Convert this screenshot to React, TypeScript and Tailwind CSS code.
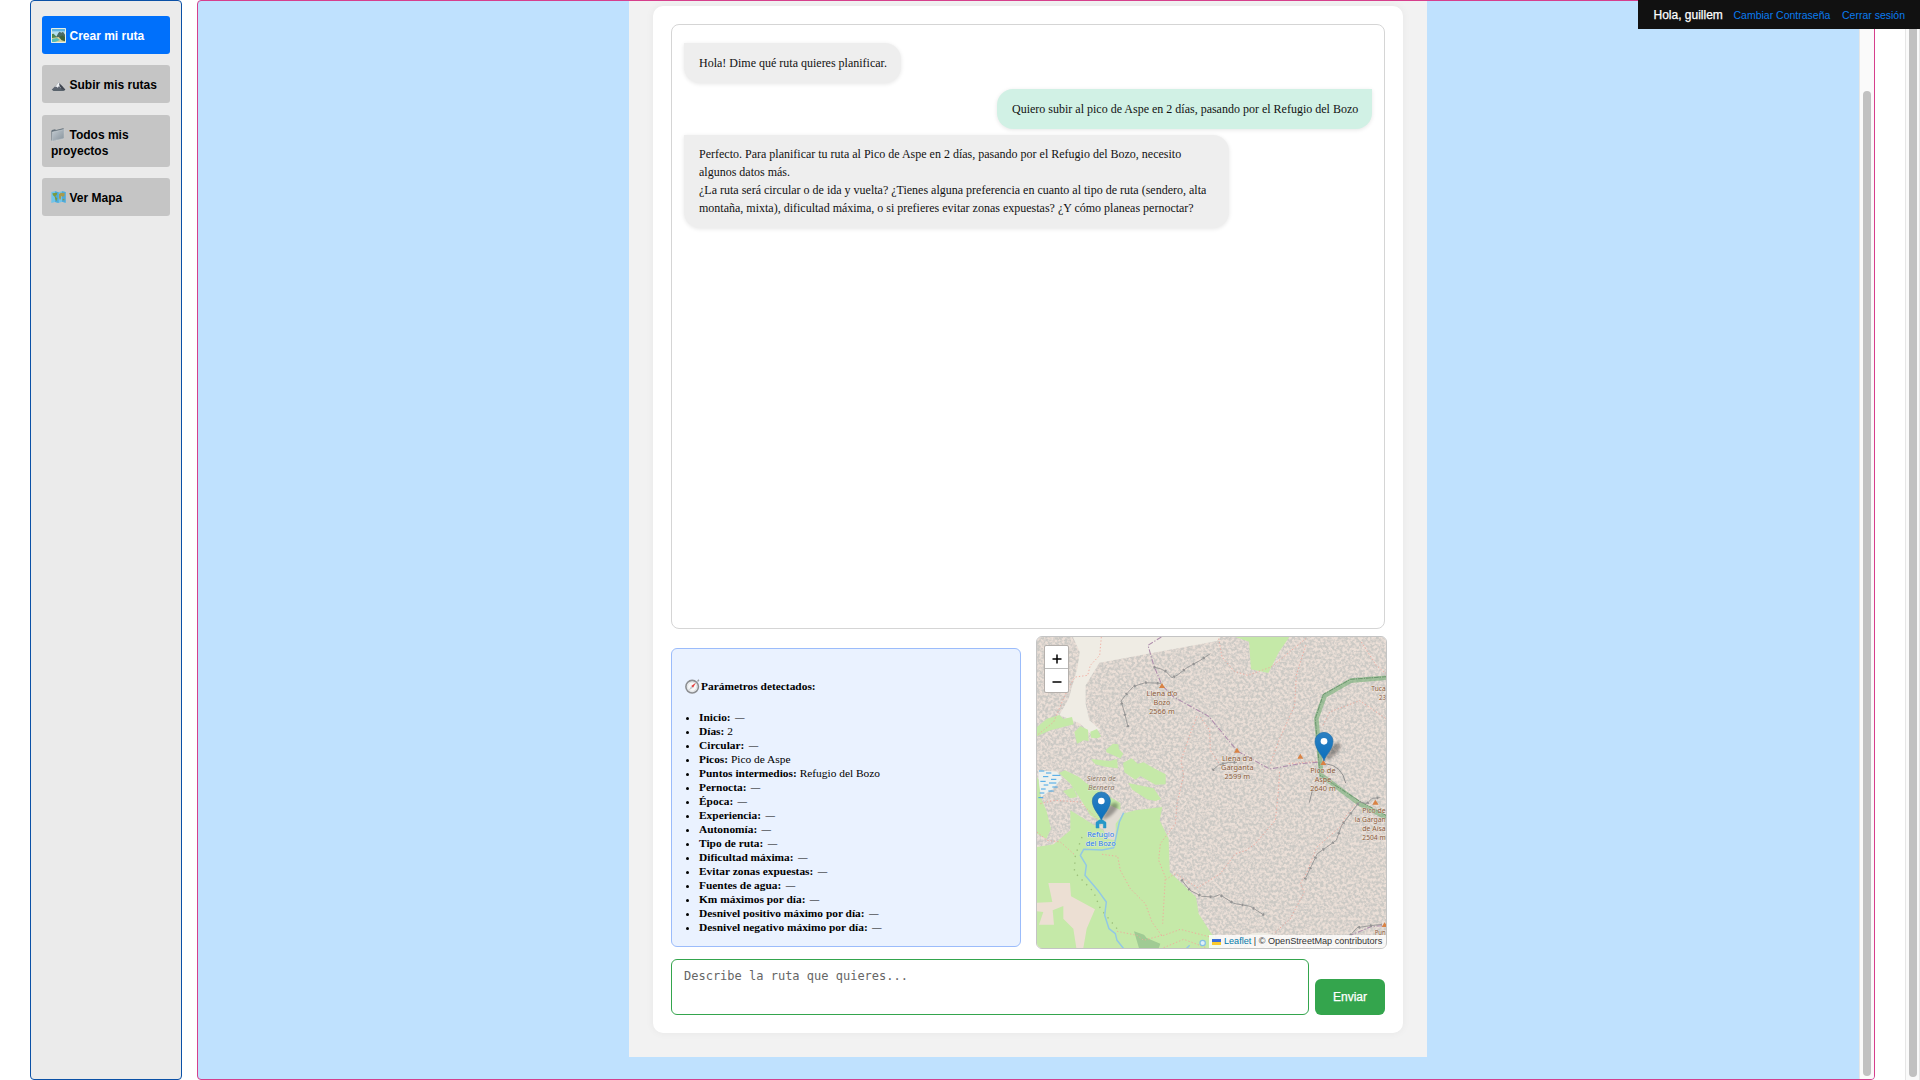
import React from "react";

const serif = "font-['Liberation_Serif',serif]";

function LandscapeIcon() {
  return (
    <svg className="h-[15px] w-[15px] shrink-0" viewBox="0 0 45 45">
      <rect width="45" height="45" rx="2" fill="#e6efe4" />
      <rect x="3" y="3" width="39" height="39" fill="#5fb4e0" />
      <rect x="3" y="10" width="39" height="18" fill="#b4dff0" />
      <path d="M15 28 22 15 26 11 31 14 36 11 42 20V34H15z" fill="#4a6c66" />
      <path d="M3 18 8 17 12 22 18 27 18 32 3 31z" fill="#4c8451" />
      <path d="M3 30 24 27 42 34V42H3z" fill="#d6d19c" />
      <path d="M3 33 18 30 27 36 12 42H3z" fill="#55bdb6" />
      <path d="M24 28 34 22 42 28V40L32 37z" fill="#3b633d" />
    </svg>
  );
}

function MountainIcon() {
  return (
    <svg className="h-[15px] w-[15px] shrink-0" viewBox="0 0 45 45">
      <path d="M2 38 10 30 17 24 23 16 28 21 34 28 43 38 36 41 8 41z" fill="#5d6470" />
      <path d="M23 16 17 24 12 30 18 29 20 33 24 27 29 33 31 27z" fill="#f1f3f6" />
      <path d="M24 19 26 28 32 35 28 40H40L43 38 33 27z" fill="#3f4550" />
      <path d="M4 38Q22 33 42 39L36 42 8 42z" fill="#59636c" />
    </svg>
  );
}

function FolderIcon() {
  return (
    <svg className="h-[15px] w-[15px] shrink-0" viewBox="0 0 45 45">
      <defs>
        <linearGradient id="folder" x1="0" y1="0" x2="1" y2="1">
          <stop offset="0" stopColor="#c4ccd2" />
          <stop offset="1" stopColor="#84909a" />
        </linearGradient>
      </defs>
      <path d="M1 12 3 9 12 7 15 9 36 4 39 5V33L3 42 1 40z" fill="#66727c" />
      <path d="M4 15 40 7 37 35 3 42z" fill="url(#folder)" stroke="#d7dde1" strokeWidth="1.2" />
    </svg>
  );
}

function WorldMapIcon() {
  return (
    <svg className="h-[15px] w-[15px] shrink-0" viewBox="0 0 45 45">
      <path d="M1 6 12 4 23 7 33 4 44 6V38L33 35 23 39 12 36 1 39z" fill="#6fc4ea" />
      <path d="M12 4 23 7V39L12 36zM33 4 44 6V38L33 35z" fill="#4fa9d8" />
      <path d="M4 10 19 8 17 15 13 18 15 22 19 25 16 34 13 28 11 20 6 16z" fill="#7c9a3d" />
      <path d="M24 12 30 8 41 10 40 18 35 20 31 17 30 25 27 31 24 23z" fill="#a99a4a" />
      <path d="M35 27 40 26 40 31 35 31z" fill="#8f9a41" />
    </svg>
  );
}

function CompassIcon() {
  return (
    <svg className="h-[15px] w-[15px] shrink-0" viewBox="0 0 43 43">
      <circle cx="20.5" cy="22" r="18" fill="#eceff1" stroke="#8c8e91" strokeWidth="4.5" />
      <circle cx="20.5" cy="22" r="13" fill="#f7f8f9" stroke="#d0d3d6" strokeWidth="1.5" />
      <path d="M36 7 40 2" stroke="#9a9c9f" strokeWidth="4" />
      <path d="M31 11 18 20 23 25z" fill="#e23b3b" />
      <path d="M11 32 18 20 23 25z" fill="#c3c8cd" />
    </svg>
  );
}

const navItems = [
  { label: "Crear mi ruta", icon: <LandscapeIcon />, cls: "h-[38px] pt-[2px] bg-[#0070fb] text-white" },
  { label: "Subir mis rutas", icon: <MountainIcon />, cls: "mt-[11px] h-[38px] pt-[2px] bg-[#c5c5c5] text-black" },
  { label: "Todos mis proyectos", icon: <FolderIcon />, cls: "mt-[12px] h-[52px] pt-[4px] bg-[#c5c5c5] text-black" },
  { label: "Ver Mapa", icon: <WorldMapIcon />, cls: "mt-[11px] h-[38px] pt-[2px] bg-[#c5c5c5] text-black" },
];

const params: [string, string][] = [
  ["Inicio:", "—"],
  ["Días:", "2"],
  ["Circular:", "—"],
  ["Picos:", "Pico de Aspe"],
  ["Puntos intermedios:", "Refugio del Bozo"],
  ["Pernocta:", "—"],
  ["Época:", "—"],
  ["Experiencia:", "—"],
  ["Autonomía:", "—"],
  ["Tipo de ruta:", "—"],
  ["Dificultad máxima:", "—"],
  ["Evitar zonas expuestas:", "—"],
  ["Fuentes de agua:", "—"],
  ["Km máximos por día:", "—"],
  ["Desnivel positivo máximo por día:", "—"],
  ["Desnivel negativo máximo por día:", "—"],
];

function Label({ x, y, lines, fill = "#8a5a38", italic = false, len, anchor = "middle" }: {
  x: number; y: number; lines: string[]; fill?: string; italic?: boolean; len: number[]; anchor?: "start" | "middle";
}) {
  return (
    <g
      fontFamily="Noto Sans, sans-serif"
      fontSize="23.5"
      fontStyle={italic ? "italic" : "normal"}
      fill={fill}
      stroke="#f6efea"
      strokeOpacity="0.6"
      strokeWidth="3"
      paintOrder="stroke"
      textAnchor={anchor}
    >
      {lines.map((t, i) => (
        <text key={t} x={x} y={y + i * 27} textLength={len[i]} lengthAdjust="spacingAndGlyphs">{t}</text>
      ))}
    </g>
  );
}

function Pin({ x, y }: { x: number; y: number }) {
  return (
    <g transform={`translate(${x} ${y})`}>
      <path d="M2 -2Q14 -40 34 -54Q56 -58 48 -38Q32 -12 2 -2z" fill="#000" opacity="0.32" filter="url(#pinBlur)" />
      <path
        d="M0 -1C-3 -16 -27 -36 -27 -60A27 27 0 0 1 27 -60C27 -36 3 -16 0 -1z"
        fill="url(#pin)"
        stroke="#1f6ea8"
        strokeWidth="2"
      />
      <circle cx="0" cy="-60" r="10" fill="#fff" />
    </g>
  );
}

function Cliff({ d }: { d: string }) {
  return (
    <g fill="none" stroke="#929292">
      <path d={d} strokeWidth="2.6" />
      <path d={d} strokeWidth="8" strokeDasharray="5 30" />
    </g>
  );
}

/* Drawn in thirds of a pixel: 1047 x 933 units fill the 349 x 311 tile area. */
function MapDrawing() {
  return (
    <svg className="block h-full w-full" viewBox="0 0 1047 933" preserveAspectRatio="none">
      <defs>
        <filter id="scree" x="0" y="0" width="100%" height="100%" colorInterpolationFilters="sRGB">
          <feTurbulence type="fractalNoise" baseFrequency="0.12" numOctaves="2" seed="7" />
          <feColorMatrix values="0 0 0 0 0.785  0 0 0 0 0.78  0 0 0 0 0.765  3.4 0 0 0 -1.2" />
        </filter>
        <filter id="pinBlur" x="-40%" y="-40%" width="180%" height="180%">
          <feGaussianBlur stdDeviation="5" />
        </filter>
        <linearGradient id="pin" x1="0" y1="0" x2="0" y2="1">
          <stop offset="0" stopColor="#2c80c2" />
          <stop offset="1" stopColor="#0a70bd" />
        </linearGradient>
      </defs>
      <rect width="1047" height="933" fill="#ebdfd7" />
      <rect width="1047" height="933" filter="url(#scree)" opacity="0.9" />

      {/* pale gravel */}
      <path d="M108 0H550L540 12 333 50 187 77 146 145V200L157 250 190 278 160 290 130 260 67 234 95 185 122 90 128 45z" fill="#efece4" />
      <path d="M625 895Q670 878 712 895z" fill="#efece4" />

      {/* meadows */}
      <g fill="#c5e9a8">
        <path d="M0 270 30 245 67 234 80 246 105 240 110 262 70 272 40 280 0 298z" />
        <path d="M112 285 130 268 153 278 155 312 140 310 120 320z" />
        <path d="M160 284 180 276 192 298 182 304 162 302z" />
        <path d="M207 338 228 320 244 322 246 336 259 350 250 364 222 352 208 346z" />
        <path d="M162 366 218 372 240 366 243 394 205 389 175 382z" />
        <path d="M258 378 284 364 302 380 320 376 348 392 386 412V442L355 443 310 417 295 428 262 406z" />
        <path d="M66 408 84 400 126 420 150 440 250 498V535L215 570 160 535 134 492 100 440z" />
        <path d="M274 438 350 454 372 486 355 492 330 487 286 458z" />
        <path d="M0 420 12 440 10 480 28 520 42 575 28 605 0 590z" />
        <path d="M78 462 108 452 122 480 100 484 90 475z" />
        <path d="M595 0H757L726 45 694 108 642 97 636 14z" />
        <path d="M100 520 165 560 205 585 240 535 295 520 376 510 368 550 395 605 398 705 430 735 477 780 485 830 520 885 558 937H0V630L50 622 100 580z" />
      </g>
      <path d="M190 550 220 505 262 525 236 560 236 610 210 606z" fill="#e1dcd3" />
      <path d="M34 738H99L102 778 174 817 149 875 139 933H118L109 875 79 845V807L47 820 51 863H6L19 825 0 823V797L46 795z" fill="#ecdfd3" />
      <path d="M291 883 321 893 329 903 370 920 364 937H307z" fill="#a0cb94" />

      {/* marsh */}
      <path d="M4 400 60 404 75 424 48 455 12 480 6 440z" fill="#edf1ee" />
      <path d="M6 402h16M27 408h16M46 415h24M18 419h16M42 427h16M10 433h16M36 438h22M20 444h14M46 450h16M12 456h14M34 462h16M8 468h14M4 482h15" stroke="#42a4e6" strokeWidth="3" />

      {/* paths */}
      <g fill="none" stroke="#f1a79b" strokeWidth="2.6" strokeDasharray="4 6">
        <path d="M193 0 188 55 160 85 152 115 115 120 98 145 75 195 50 255 25 275 0 295" />
        <path d="M480 238 460 290 432 370 440 415 420 500 415 560 370 620 365 670 385 720 377 860" />
        <path d="M490 240 518 280 520 340 550 385" />
        <path d="M545 5 555 60 592 103 632 115 702 90 772 33 810 2M806 25 778 115 773 205 728 305 698 385" />
        <path d="M973 15 1018 85 1047 110M858 265 878 225 968 191 1047 245M728 405 723 475 715 550 655 620 628 640 595 650 550 710 482 752 415 710 385 728" />
        <path d="M960 495 925 540 915 565 840 630 810 705 790 740 802 765 760 845 710 890" />
        <path d="M0 585 30 610 70 615 115 655M195 652 242 658 250 700 280 755 325 800 345 855 375 897 430 877 520 900M240 883 300 895 320 910 375 895M380 932 440 907 510 933M10 500 50 490 130 495 190 555" />
        <path d="M755 380 845 373" />
      </g>
      <path d="M135 600 115 655 112 705 170 765 190 815 240 875" fill="none" stroke="#9cbf7a" strokeWidth="4" strokeDasharray="4 16" />

      {/* stream */}
      <path d="M260 527 247 555 230 632 195 639 140 637 130 655 148 685 144 715 185 763 208 795 203 835 216 875 235 890 240 910 260 935M448 935 458 925" fill="none" stroke="#93c8e4" strokeWidth="4.5" strokeLinejoin="round" />

      {/* boundaries */}
      <path d="M373 0 333 25 350 85 375 145 410 180 515 238 601 342 698 396 790 380 860 374M935 897 1005 868 1040 866" fill="none" stroke="#ae8dac" strokeWidth="3.2" strokeDasharray="16 5 4 5" />
      <path d="M1049 122 941 131 863 176 838 245 853 415 967 500 1049 542" fill="none" stroke="#76b078" strokeOpacity="0.62" strokeWidth="14" strokeLinejoin="round" />
      <path d="M1049 119 941 127 859 172 835 245 849 415 967 492 1049 536" fill="none" stroke="#4f7f55" strokeWidth="3" strokeDasharray="14 3 4 3" opacity="0.65" />

      {/* ridges */}
      <Cliff d="M273 270 262 225 252 192 265 175 290 148 325 137 372 139" />
      <Cliff d="M350 90 372 96 386 103 405 122 420 115 450 92 490 70 520 50" />
      <Cliff d="M527 400 545 384 575 376 600 376" />
      <Cliff d="M433 728 459 760 494 778 530 780 548 773 590 799 640 808 682 835" />
      <Cliff d="M804 727 841 650 898 610 914 565 967 495 990 500 1005 484 1030 482" />
      <Cliff d="M940 895 960 872 1000 866 1035 862" />
      <path d="M865 380Q915 385 926 438M817 497 826 460" fill="none" stroke="#929292" strokeWidth="3" />

      {/* summits */}
      <path d="M375 138 384 153H366zM600 332 609 347H591zM790 350 799 365H781zM859 369 868 384H850zM1015 488 1025 503H1006zM1043 856 1052 870H1034zM914 900 922 912H906z" fill="#d98244" />

      <circle cx="497" cy="918" r="8" fill="#dff0f8" stroke="#83c0e6" strokeWidth="3.5" />

      <Label x={375} y={178} lines={["Llena d'o", "Bozo", "2566 m"]} len={[93, 51, 77]} />
      <Label x={193} y={432} lines={["Sierra de", "Bernera"]} len={[88, 80]} fill="#8a7464" italic />
      <Label x={601} y={371} lines={["Llena d'a", "Garganta", "2599 m"]} len={[92, 98, 77]} />
      <Label x={858} y={408} lines={["Pico de", "Aspe", "2640 m"]} len={[76, 50, 77]} />
      <Label x={1003} y={162} lines={["Tuca"]} len={[43]} anchor="start" />
      <Label x={1026} y={189} lines={["23"]} len={[21]} anchor="start" />
      <Label x={976} y={528} lines={["Pico de"]} len={[70]} anchor="start" />
      <Label x={953} y={555} lines={["la Gargan"]} len={[93]} anchor="start" />
      <Label x={976} y={582} lines={["de Aísa"]} len={[70]} anchor="start" />
      <Label x={976} y={609} lines={["2504 m"]} len={[70]} anchor="start" />
      <Label x={1013} y={895} lines={["Pun"]} len={[33]} anchor="start" />

      <Pin x={193} y={552} />
      <Pin x={861} y={373} />
      <path d="M177 573V556L187 549H197L207 556V573H199V560H186V573z" fill="#2597c8" stroke="#2597c8" strokeWidth="1.5" />
      <Label x={191} y={599} lines={["Refugio", "del Bozo"]} len={[81, 90]} fill="#1f7cf0" />
    </svg>
  );
}

function RouteMap() {
  return (
    <div className="relative h-[313px] w-[351px] overflow-hidden rounded-[6px] border border-[#c4c4c4]">
      <MapDrawing />
      <div className="absolute top-[8px] left-[7px] flex w-[25px] flex-col overflow-hidden rounded-[2px] border border-[#b5b0ac] bg-white">
        <span className="flex h-[23px] items-center justify-center border-b border-[#bbb] pt-[3px]">
          <svg width="10" height="10" viewBox="0 0 10 10"><path d="M0.5 5h9M5 0.5v9" stroke="#000" strokeWidth="1.5" /></svg>
        </span>
        <span className="flex h-[23px] items-center justify-center pt-[2px]">
          <svg width="10" height="10" viewBox="0 0 10 10"><path d="M0.5 5h9" stroke="#000" strokeWidth="1.5" /></svg>
        </span>
      </div>
      <div className="absolute right-0 bottom-0 flex h-[13px] w-[177px] items-center whitespace-pre bg-white/80 pl-[3px] text-[9.1px] leading-[13px] text-[#333]">
        <span className="mr-[3px] flex h-[6px] w-[9px] flex-col">
          <span className="h-[3px] bg-[#3c6fd8]" />
          <span className="h-[3px] bg-[#fccb2c]" />
        </span>
        <span className="text-[#0078a8]">Leaflet</span>
        <span> | © OpenStreetMap contributors</span>
      </div>
    </div>
  );
}

export default function App() {
  return (
    <div className="relative flex h-[1080px] w-[1920px] overflow-hidden bg-white pl-[30px] font-['Liberation_Sans',sans-serif] text-[12px]">
      <aside className="flex w-[152px] shrink-0 flex-col rounded-[4px] border border-[#0a50a6] bg-[#ebebeb] px-[11px] pt-[15px]">
        {navItems.map((n) => (
          <button
            key={n.label}
            className={`${n.cls} flex shrink-0 items-center rounded-[3px] px-[9px] text-left font-bold leading-[16px]`}
          >
            <span>
              <span className="mr-[3.5px] inline-block h-[15px] align-[-3px]">{n.icon}</span>
              {n.label}
            </span>
          </button>
        ))}
      </aside>

      <main className="ml-[15px] flex w-[1678px] shrink-0 overflow-hidden rounded-[4px] border border-[#d63f8c] bg-[#bfe1fe]">
        <div className="flex-1 pl-[431px]">
          <div className="h-[1056px] w-[798px] bg-[#f2f2f2] px-[24px] pt-[5px]">
            <section className="h-[1027px] rounded-[10px] bg-white p-[18px] shadow-[0_0_8px_rgba(0,0,0,0.05)]">
              <div className={`${serif} flex h-[605px] flex-col gap-[6px] rounded-[8px] border border-[#d5d5d5] px-[12px] pt-[18px] leading-[18px] text-[#111]`}>
                <div className="w-[217px] self-start whitespace-nowrap rounded-[16px] rounded-tl-none bg-[#eeeeee] py-[11px] pl-[15px] shadow-[0_1px_4px_rgba(0,0,0,0.1)]">
                  Hola! Dime qué ruta quieres planificar.
                </div>
                <div className="w-[375px] self-end rounded-[16px] rounded-tr-none bg-[#d1f1e5] py-[11px] pl-[15px] whitespace-nowrap shadow-[0_1px_4px_rgba(0,0,0,0.1)]">
                  Quiero subir al pico de Aspe en 2 días, pasando por el Refugio del Bozo
                </div>
                <div className="w-[545px] self-start whitespace-nowrap rounded-[16px] rounded-tl-none bg-[#eeeeee] px-[15px] pt-[10px] pb-[11px] shadow-[0_1px_4px_rgba(0,0,0,0.1)]">
                  Perfecto. Para planificar tu ruta al Pico de Aspe en 2 días, pasando por el Refugio del Bozo, necesito
                  <br />
                  algunos datos más.
                  <br />
                  ¿La ruta será circular o de ida y vuelta? ¿Tienes alguna preferencia en cuanto al tipo de ruta (sendero, alta
                  <br />
                  montaña, mixta), dificultad máxima, o si prefieres evitar zonas expuestas? ¿Y cómo planeas pernoctar?
                </div>
              </div>

              <div className="mt-[7px] flex w-[716px] items-start justify-between">
                <div className={`${serif} mt-[12px] h-[299px] w-[350px] rounded-[6px] border border-[#9bbcfb] bg-[#eaf2ff] px-[13px] pt-[29px] text-[11.4px] text-black`}>
                  <h4 className="flex items-center gap-[1px] font-bold leading-[16px]">
                    <CompassIcon />
                    <span>Parámetros detectados:</span>
                  </h4>
                  <ul className="mt-[16px] list-disc pl-[14px] leading-[14px]">
                    {params.map(([k, v]) => (
                      <li key={k} className="h-[14px]">
                        <strong>{k}</strong>{" "}
                        {v === "—" ? <span className="pl-[1.5px] text-[9.5px] leading-none">{v}</span> : v}
                      </li>
                    ))}
                  </ul>
                </div>
                <RouteMap />
              </div>

              <div className="mt-[10px] flex items-end justify-between">
                <textarea
                  className="block h-[56px] w-[638px] resize-none rounded-[6px] border border-[#34a54d] bg-white px-[12px] py-[9px] font-['DejaVu_Sans_Mono',monospace] text-[12px] leading-[15px] outline-none placeholder:text-[#666]"
                  placeholder="Describe la ruta que quieres..."
                />
                <button className="h-[36px] w-[70px] rounded-[6px] bg-[#34a54d] text-[12px] text-white [-webkit-text-stroke:0.25px_white]">Enviar</button>
              </div>
            </section>
          </div>
        </div>
        <div className="flex w-[15px] flex-col items-center border-l border-[#e6e6e6] bg-[#fafafa] pt-[90px]">
          <div className="h-[985px] w-[8px] rounded-full bg-[#c1c1c1]" />
        </div>
      </main>

      <div className="ml-auto flex w-[15px] flex-col items-center border-x border-[#e6e6e6] bg-[#fafafa]">
        <div className="h-[1077px] w-[8px] rounded-full bg-[#c1c1c1]" />
      </div>

      <header className="absolute top-0 right-0 flex h-[29px] w-[282px] items-center bg-[#111] pl-[15.5px] whitespace-nowrap">
        <strong className="w-[80px] font-normal text-white [-webkit-text-stroke:0.25px_white]">Hola, guillem</strong>
        <a className="w-[108.5px] pt-[2px] text-[10.5px] text-[#0a7cf0]">Cambiar Contraseña</a>
        <a className="pt-[2px] text-[10.5px] text-[#0a7cf0]">Cerrar sesión</a>
      </header>
    </div>
  );
}
